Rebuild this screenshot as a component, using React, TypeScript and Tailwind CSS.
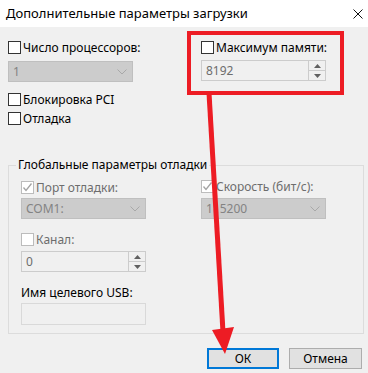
import React from "react";

function Box({ checked, disabled }: { checked?: boolean; disabled?: boolean }) {
  return (
    <span
      className={
        disabled
          ? "w-[13px] h-[13px] border border-[#bcbcbc] bg-white shrink-0 flex items-center justify-center"
          : "w-[13px] h-[13px] border border-[#333333] bg-white shrink-0 flex items-center justify-center"
      }
    >
      {checked && (
        <svg width="11" height="11" viewBox="0 0 11 11">
          <polyline points="1.5,5.5 4,8.5 9.5,1.5" fill="none" stroke="#a3a3a3" strokeWidth="1.3" />
        </svg>
      )}
    </span>
  );
}

function Check({ label, checked, disabled }: { label: string; checked?: boolean; disabled?: boolean }) {
  return (
    <div className="flex items-center h-[13px] gap-[2px]">
      <Box checked={checked} disabled={disabled} />
      <span className={disabled ? "text-[#6d6d6d] leading-none" : "text-black leading-none"}>{label}</span>
    </div>
  );
}

function Combo({ value }: { value: string }) {
  return (
    <div className="w-[125px] h-[21px] bg-[#cccccc] border border-[#bfbfbf] flex items-center justify-between pl-[4px] pr-[5px]">
      <span className="text-[#838383] leading-none">{value}</span>
      <svg width="10" height="6" viewBox="0 0 10 6">
        <polyline points="0.5,0.5 5,5 9.5,0.5" fill="none" stroke="#a8a8a8" strokeWidth="1" />
      </svg>
    </div>
  );
}

function Spin({ value }: { value: string }) {
  return (
    <div className="w-[125px] h-[21px] bg-[#f0f0f0] border border-[#cccccc] flex items-stretch">
      <div className="flex-1 flex items-center pl-[4px] text-[#6d6d6d] leading-none">{value}</div>
      <div className="w-[17px] flex flex-col border-l border-[#cccccc]">
        <div className="flex-1 flex items-center justify-center border-b border-[#cccccc] bg-[#f0f0f0]">
          <svg width="7" height="4" viewBox="0 0 7 4">
            <polygon points="0,4 3.5,0 7,4" fill="#606060" />
          </svg>
        </div>
        <div className="flex-1 flex items-center justify-center bg-[#f0f0f0]">
          <svg width="7" height="4" viewBox="0 0 7 4">
            <polygon points="0,0 3.5,4 7,0" fill="#606060" />
          </svg>
        </div>
      </div>
    </div>
  );
}

export default function App() {
  return (
    <div className="w-[368px] h-[373px] relative overflow-hidden bg-[#f0f0f0] text-[12px] text-black font-['Segoe_UI','Noto_Sans',sans-serif]">
      <div className="h-[27px] bg-white flex items-center justify-between pl-[6px] pr-[5px]">
        <span className="text-[13px]">Дополнительные параметры загрузки</span>
        <svg width="10" height="10" viewBox="0 0 10 10">
          <path d="M0.5 0.5 L9.5 9.5 M9.5 0.5 L0.5 9.5" stroke="#111" strokeWidth="1" />
        </svg>
      </div>

      <div className="pl-[8px] pt-[14px]">
        <div className="flex">
          <div className="w-[193px] flex flex-col">
            <Check label="Число процессоров:" />
            <div className="mt-[7px]">
              <Combo value="1" />
            </div>
            <div className="mt-[11px]">
              <Check label="Блокировка PCI" />
            </div>
            <div className="mt-[6px]">
              <Check label="Отладка" />
            </div>
          </div>
          <div className="flex flex-col">
            <Check label="Максимум памяти:" />
            <div className="mt-[6px]">
              <Spin value="8192" />
            </div>
          </div>
        </div>

        <fieldset className="mt-[32px] w-[356px] border border-[#dcdcdc] pb-[8px]">
          <legend className="ml-[7px] px-[2px] leading-[16px]">Глобальные параметры отладки</legend>
          <div className="pt-[8px] pl-[12px] flex">
            <div className="w-[180px] flex flex-col">
              <Check label="Порт отладки:" checked disabled />
              <div className="mt-[4px]">
                <Combo value="COM1:" />
              </div>
              <div className="mt-[14px]">
                <Check label="Канал:" disabled />
              </div>
              <div className="mt-[5px]">
                <Spin value="0" />
              </div>
              <div className="mt-[13px] leading-[16px]">Имя целевого USB:</div>
              <div className="mt-[2px] w-[125px] h-[22px] border border-[#d9d9d9] bg-[#f0f0f0]" />
            </div>
            <div className="flex flex-col -mt-[1px]">
              <Check label="Скорость (бит/с):" checked disabled />
              <div className="mt-[5px]">
                <Combo value="115200" />
              </div>
            </div>
          </div>
        </fieldset>
      </div>

      <div className="mt-[14px] flex justify-end gap-[10px] pr-[6px]">
        <button className="w-[72px] h-[21px] border-2 border-[#0078d7] bg-[#e1e1e1] flex items-center justify-center leading-none">
          ОК
        </button>
        <button className="w-[73px] h-[21px] border border-[#adadad] bg-[#e1e1e1] flex items-center justify-center leading-none">
          Отмена
        </button>
      </div>

      <svg className="absolute left-0 top-0 pointer-events-none" width="368" height="373" viewBox="0 0 368 373">
        <rect x="189" y="33" width="153" height="60" fill="none" stroke="#ed1c24" strokeWidth="4" />
        <line x1="209" y1="93" x2="223" y2="332" stroke="#ed1c24" strokeWidth="5" />
        <polygon points="212,330 234,327 225,354" fill="#ed1c24" />
      </svg>
    </div>
  );
}
